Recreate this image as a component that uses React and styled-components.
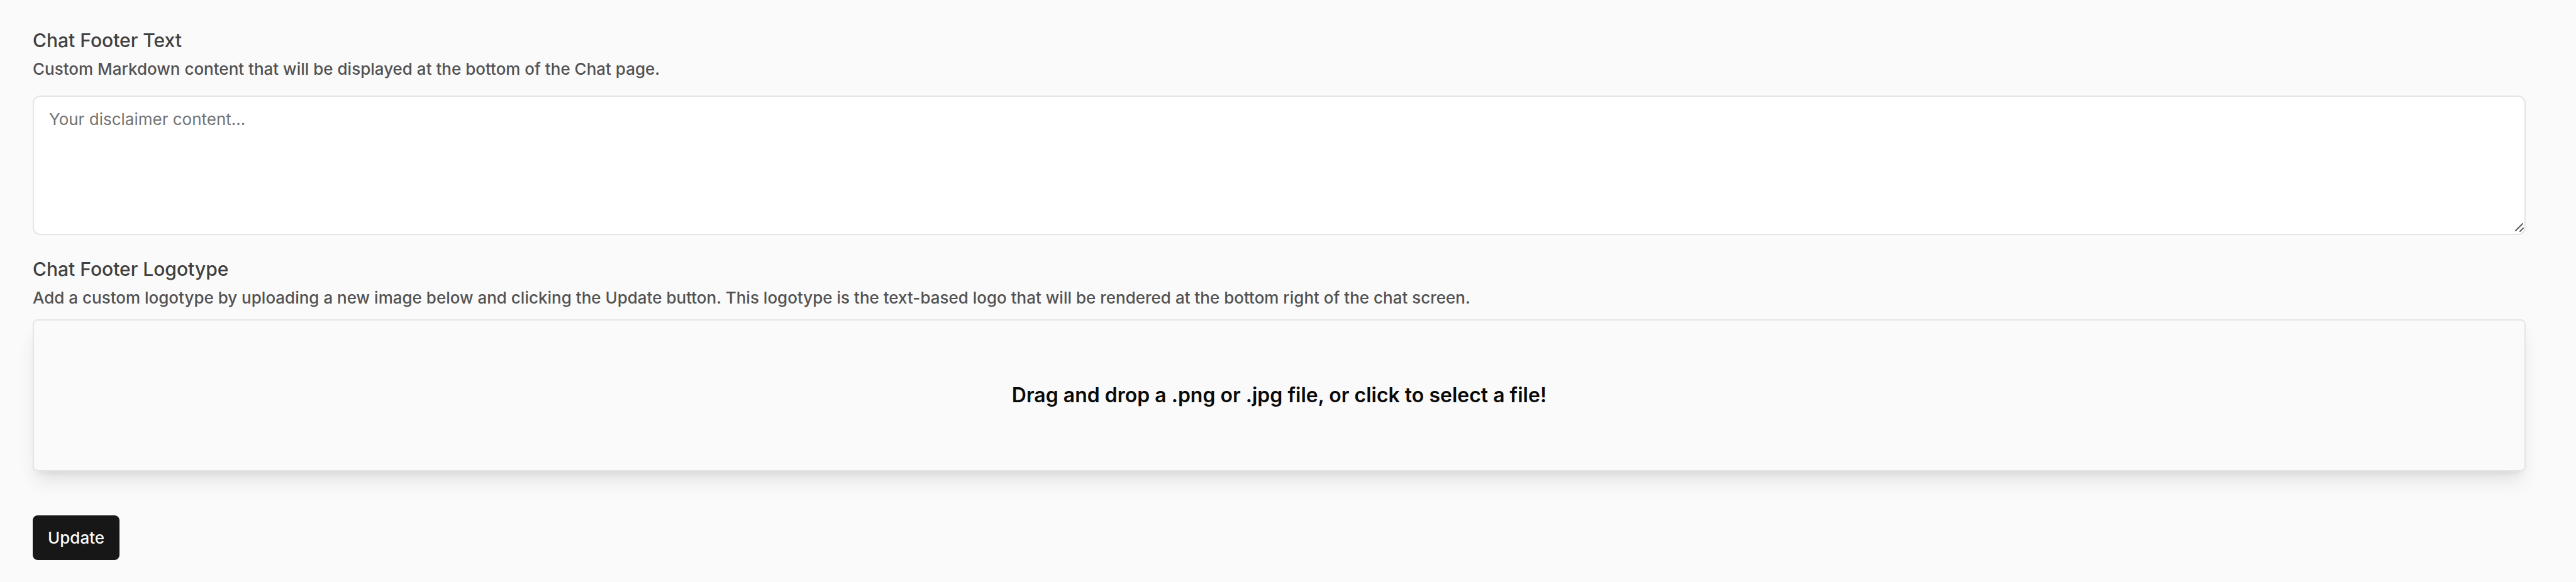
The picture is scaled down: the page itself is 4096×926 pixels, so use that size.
import React from "react";
import styled, { createGlobalStyle } from "styled-components";

const sans = `Inter, "Liberation Sans", sans-serif`;

const Global = createGlobalStyle`
  *, *::before, *::after { box-sizing: border-box; }
  body { margin: 0; background: #fafafa; font-family: ${sans}; color: #404040; }
`;
const Form = styled.form`
  display: flex;
  flex-direction: column;
  gap: 34px;
  padding: 44px 80px 32px 52px;
`;
const Field = styled.div`
  display: flex;
  flex-direction: column;
`;
const Label = styled.label`
  font-size: 30px;
  line-height: 40px;
  font-weight: 500;
`;
const Hint = styled.p`
  margin: 0;
  padding-top: 4px;
  font-size: 26px;
  font-weight: 450;
  line-height: 44px;
  color: #525252;
`;
const TextBox = styled.div`
  position: relative;
  display: flex;
  margin-top: 20px;
`;
const TextArea = styled.textarea`
  display: block;
  width: 100%;
  height: 222px;
  padding: 16px 24px;
  border: 2px solid #e5e5e5;
  border-radius: 12px;
  background: #fff;
  color: #404040;
  font: 400 26px/40px ${sans};
  resize: vertical;
  &::placeholder { color: #737373; opacity: 1; }
  &::-webkit-resizer { background: transparent; }
`;
const Grip = styled.svg`
  position: absolute;
  right: 3px;
  bottom: 4px;
  width: 16px;
  height: 16px;
  pointer-events: none;
`;
const Drop = styled.button`
  width: 100%;
  height: 242px;
  margin: 12px 0 36px;
  border: 2px solid #e5e5e5;
  border-radius: 8px;
  background: #fafafa;
  font: 600 32px/40px ${sans};
  color: #0a0a0a;
  box-shadow: 0 20px 30px -6px rgba(0,0,0,.1), 0 8px 12px -8px rgba(0,0,0,.1);
`;
const Submit = styled.button`
  align-self: flex-start;
  height: 71px;
  padding: 0 24px;
  border: 0;
  border-radius: 8px;
  background: #171717;
  color: #fafafa;
  font: 500 26px/40px ${sans};
`;

export default function App() {
  return (
    <>
      <Global />
      <Form>
        <Field>
          <Label htmlFor="footer-text">Chat Footer Text</Label>
          <Hint id="footer-text-hint">
            Custom Markdown content that will be displayed at the bottom of the Chat page.
          </Hint>
          <TextBox>
            <TextArea
              id="footer-text"
              aria-describedby="footer-text-hint"
              placeholder="Your disclaimer content..."
            />
            <Grip viewBox="0 0 16 16" fill="none" stroke="#5c5c5c" strokeWidth="2" strokeLinecap="round" aria-hidden="true">
              <path d="M3 13 14 2M10 14l5-5" />
            </Grip>
          </TextBox>
        </Field>
        <Field>
          <Label htmlFor="footer-logo">Chat Footer Logotype</Label>
          <Hint id="footer-logo-hint">
            Add a custom logotype by uploading a new image below and clicking the Update button.
            This logotype is the text-based logo that will be rendered at the bottom right of the chat screen.
          </Hint>
          <Drop id="footer-logo" type="button" aria-describedby="footer-logo-hint">
            Drag and drop a .png or .jpg file, or click to select a file!
          </Drop>
        </Field>
        <Submit type="button">Update</Submit>
      </Form>
    </>
  );
}
